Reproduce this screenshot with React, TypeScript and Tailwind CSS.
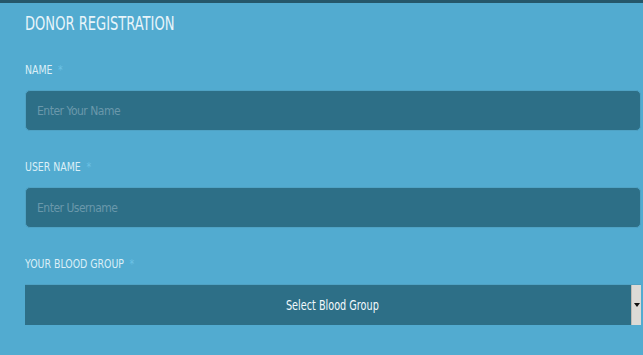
const font = { fontFamily: '"DejaVu Sans Condensed", "DejaVu Sans", sans-serif' };

// the screenshot uses a narrow display face; DejaVu Condensed squeezed a bit more gets close
const Label = ({ text }: { text: string }) => (
  <label className="block text-[12px] leading-[16px] text-[#dbeff7] mb-[12px] uppercase">
    <span className="inline-block scale-x-[0.87] origin-left whitespace-nowrap">
      {text} <span className="text-[#6cc2e5] ml-[3px]">*</span>
    </span>
  </label>
);

const inputCls =
  'block w-full h-[41px] rounded-[5px] bg-[#2d6f87] border border-[#4fa2c4] px-[11px] text-[12px] tracking-[-0.5px] text-white placeholder:text-[#6a98ab] outline-none';

export default function App() {
  return (
    <div
      className="w-[643px] h-[355px] overflow-hidden bg-[#52abd0] border-t-[3px] border-[#25576a] pl-[25px] pr-[2px] pt-[8px]"
      style={font}
    >
      <h2 className="text-[19px] leading-[24px] text-[#e8f5fa] mb-[27px]">
        <span className="inline-block scale-x-[0.765] origin-left whitespace-nowrap">DONOR REGISTRATION</span>
      </h2>

      <Label text="Name" />
      <input placeholder="Enter Your Name" className={`${inputCls} mb-[28px]`} style={font} />

      <Label text="User Name" />
      <input placeholder="Enter Username" className={`${inputCls} mb-[28px]`} style={font} />

      <Label text="Your Blood Group" />
      <div className="flex h-[41px] w-full bg-[#2d6f87] border-t border-[#4fa2c4]">
        <div className="flex-1 flex items-center justify-center pl-[8px] text-[14px] text-[#f2f9fc]">
          <span className="inline-block scale-x-[0.77] whitespace-nowrap">Select Blood Group</span>
        </div>
        <div className="w-[10px] h-full bg-[#dcdad6] border-l border-[#bdbab4] flex items-center justify-center">
          <svg width="6" height="5" viewBox="0 0 6 5">
            <path d="M0 0 H6 L3 4 Z" fill="#111" />
          </svg>
        </div>
      </div>
    </div>
  );
}
